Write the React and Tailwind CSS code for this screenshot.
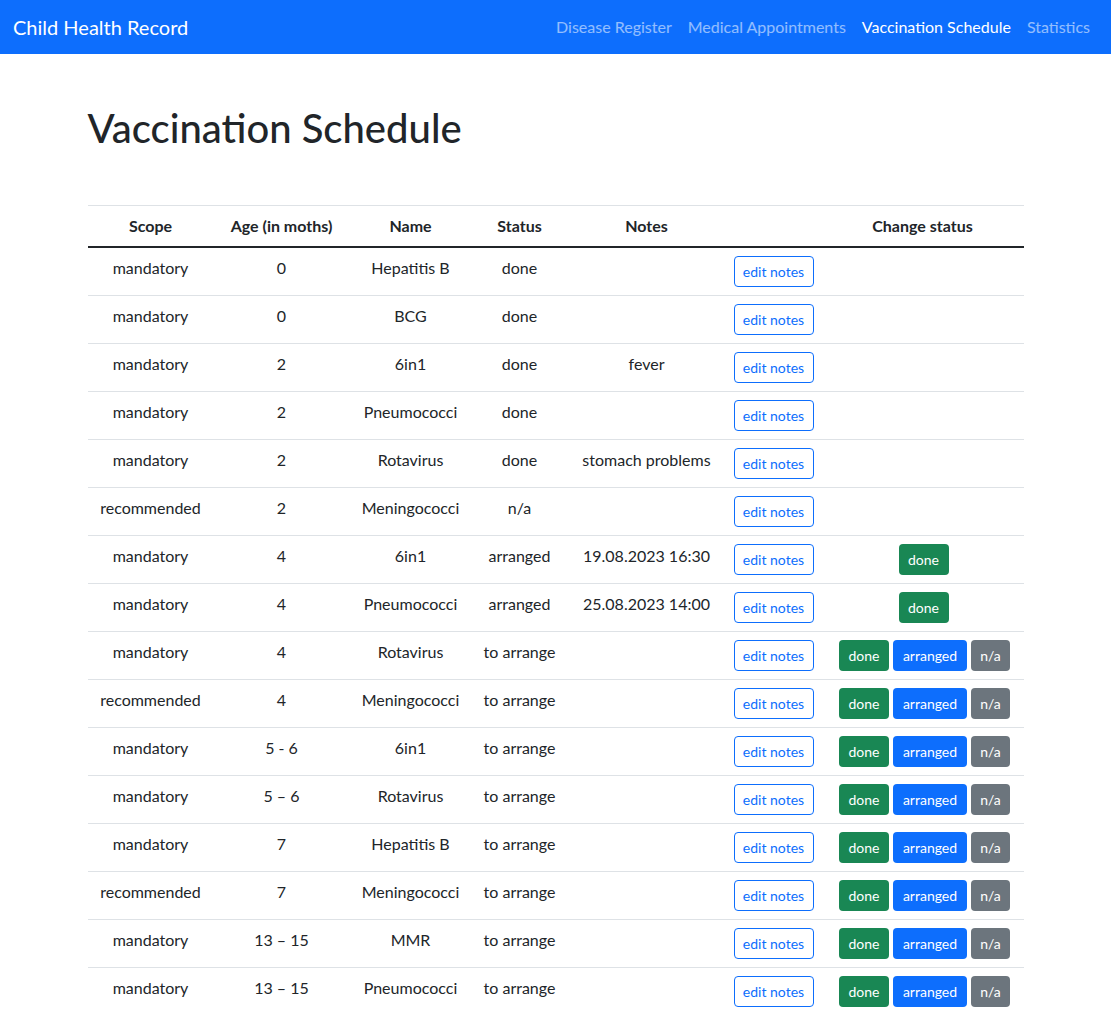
import React from "react";

const rows = [
  ["mandatory", "0", "Hepatitis B", "done", "", ""],
  ["mandatory", "0", "BCG", "done", "", ""],
  ["mandatory", "2", "6in1", "done", "fever", ""],
  ["mandatory", "2", "Pneumococci", "done", "", ""],
  ["mandatory", "2", "Rotavirus", "done", "stomach problems", ""],
  ["recommended", "2", "Meningococci", "n/a", "", ""],
  ["mandatory", "4", "6in1", "arranged", "19.08.2023 16:30", "arranged"],
  ["mandatory", "4", "Pneumococci", "arranged", "25.08.2023 14:00", "arranged"],
  ["mandatory", "4", "Rotavirus", "to arrange", "", "all"],
  ["recommended", "4", "Meningococci", "to arrange", "", "all"],
  ["mandatory", "5 - 6", "6in1", "to arrange", "", "all"],
  ["mandatory", "5 – 6", "Rotavirus", "to arrange", "", "all"],
  ["mandatory", "7", "Hepatitis B", "to arrange", "", "all"],
  ["recommended", "7", "Meningococci", "to arrange", "", "all"],
  ["mandatory", "13 – 15", "MMR", "to arrange", "", "all"],
  ["mandatory", "13 – 15", "Pneumococci", "to arrange", "", "all"],
];

const btn = "h-[31px] px-0 text-[14px] leading-[21px] rounded-[4px] text-white border border-transparent whitespace-nowrap";

export default function App() {
  return (
    <div className="min-h-screen bg-white text-[#212529] font-['Lato',sans-serif]">
      <nav className="h-[54px] bg-[#0d6efd] flex items-center justify-between pl-[13px] pr-[13px]">
        <a href="#" className="text-white text-[20px]">Child Health Record</a>
        <div className="flex text-[16px]">
          <a href="#" className="px-2 text-white/55">Disease Register</a>
          <a href="#" className="px-2 text-white/55">Medical Appointments</a>
          <a href="#" className="px-2 text-white">Vaccination Schedule</a>
          <a href="#" className="px-2 text-white/55">Statistics</a>
        </div>
      </nav>
      <main className="w-[936px] mx-auto">
        <h1 className="mt-[50px] mb-[53px] text-[40px] leading-[48px] font-medium">Vaccination Schedule</h1>
        <table className="w-full table-fixed border-t border-[#dee2e6] text-[16px] leading-6">
          <thead>
            <tr className="border-b-2 border-[#212529]">
              <th className="w-[126px] py-2 font-bold">Scope</th>
              <th className="w-[136px] py-2 font-bold">Age (in moths)</th>
              <th className="w-[122px] py-2 font-bold">Name</th>
              <th className="w-[96px] py-2 font-bold">Status</th>
              <th className="w-[158px] py-2 font-bold">Notes</th>
              <th className="w-[96px] py-2"></th>
              <th className="py-2 font-bold">Change status</th>
            </tr>
          </thead>
          <tbody>
            {rows.map((r, i) => (
              <tr key={i} className="border-b border-[#dee2e6] align-top text-center">
                <td className="p-2 whitespace-nowrap">{r[0]}</td>
                <td className="p-2 whitespace-nowrap">{r[1]}</td>
                <td className="p-2 whitespace-nowrap">{r[2]}</td>
                <td className="p-2 whitespace-nowrap">{r[3]}</td>
                <td className="p-2 whitespace-nowrap">{r[4]}</td>
                <td className="p-2 text-left">
                  <button className="h-[31px] w-[80px] px-0 text-[14px] leading-[21px] rounded-[4px] border border-[#0d6efd] text-[#0d6efd] bg-white whitespace-nowrap">edit notes</button>
                </td>
                <td className="p-2">
                  {r[5] === "arranged" && (
                    <div className="flex justify-center pl-[2px]">
                      <button className={btn + " bg-[#198754] w-[50px]"}>done</button>
                    </div>
                  )}
                  {r[5] === "all" && (
                    <div className="flex justify-center gap-1 pl-[4px]">
                      <button className={btn + " bg-[#198754] w-[50px]"}>done</button>
                      <button className={btn + " bg-[#0d6efd] w-[74px]"}>arranged</button>
                      <button className={btn + " bg-[#6c757d] w-[39px]"}>n/a</button>
                    </div>
                  )}
                </td>
              </tr>
            ))}
          </tbody>
        </table>
      </main>
    </div>
  );
}
